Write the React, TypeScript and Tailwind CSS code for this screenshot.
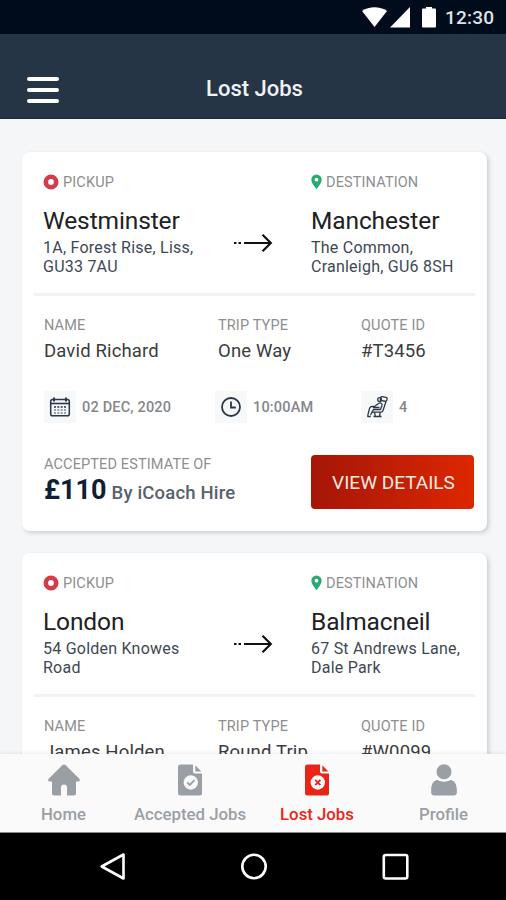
import type { ReactNode } from 'react';

type Job = {
  from: string;
  fromAddress: string[];
  to: string;
  toAddress: string[];
  name: string;
  tripType: string;
  quoteId: string;
  date: string;
  time: string;
  seats: number;
  price: string;
  company: string;
};

const jobs: Job[] = [
  {
    from: 'Westminster',
    fromAddress: ['1A, Forest Rise, Liss,', 'GU33 7AU'],
    to: 'Manchester',
    toAddress: ['The Common,', 'Cranleigh, GU6 8SH'],
    name: 'David Richard',
    tripType: 'One Way',
    quoteId: '#T3456',
    date: '02 DEC, 2020',
    time: '10:00AM',
    seats: 4,
    price: '£110',
    company: 'iCoach Hire',
  },
  {
    from: 'London',
    fromAddress: ['54 Golden Knowes', 'Road'],
    to: 'Balmacneil',
    toAddress: ['67 St Andrews Lane,', 'Dale Park'],
    name: 'James Holden',
    tripType: 'Round Trip',
    quoteId: '#W0099',
    date: '02 DEC, 2020',
    time: '10:00AM',
    seats: 4,
    price: '£110',
    company: 'iCoach Hire',
  },
];

function StatusBar() {
  return (
    <div className="flex h-[34px] shrink-0 items-center bg-[#000c1b] pl-[361px] text-white">
      <svg width="27" height="22" viewBox="0 0 27 22" fill="currentColor">
        <path d="M1 5C8 .1 19 .1 26 5L13.5 21z" />
      </svg>
      <svg className="ml-0.5" width="20" height="22" viewBox="0 0 20 22" fill="currentColor">
        <path d="M20 1v20.500H0z" />
      </svg>
      <svg className="ml-3" width="14" height="22" viewBox="0 0 14 22" fill="currentColor">
        <path d="M4 1h6v1.500h3a1 1 0 0 1 1 1V20.500a1 1 0 0 1-1 1H1a1 1 0 0 1-1-1V3.500a1 1 0 0 1 1-1h3z" />
      </svg>
      <span className="mt-0.5 ml-[9px] text-[19px] font-medium tracking-[0.2px] text-[#dfe2e6]">12:30</span>
    </div>
  );
}

function Header() {
  return (
    <header className="grid h-[85px] shrink-0 grid-cols-[1fr_auto_1fr] items-center border-b border-[#1c2938] bg-[#263545] pr-6 pl-[27px] pt-[25px]">
      <button type="button" aria-label="Menu" className="mt-0.5 flex w-8 flex-col gap-[7px]">
        <span className="h-1 rounded-sm bg-white" />
        <span className="h-1 rounded-sm bg-white" />
        <span className="h-1 rounded-sm bg-white" />
      </button>
      <h1 className="text-[22px] leading-7 font-medium text-[#f0f2f5]">Lost Jobs</h1>
    </header>
  );
}

function PickupIcon() {
  return (
    <svg className="mb-[3px]" width="16" height="16" viewBox="0 0 16 16">
      <circle cx="8" cy="8" r="5.200" fill="none" stroke="#d63b4b" strokeWidth="4.600" />
    </svg>
  );
}

function PinIcon() {
  return (
    <svg className="mb-[3px]" width="11" height="16" viewBox="0 0 11 16">
      <path
        fill="#28ab72"
        fillRule="evenodd"
        d="M5.500 .5A5.200 5.200 0 0 0 .3 5.700C.3 9 5.500 15.200 5.500 15.200S10.700 9 10.700 5.700A5.200 5.200 0 0 0 5.500 .5zm0 3.300a1.900 1.900 0 1 1 0 3.800a1.900 1.900 0 0 1 0-3.800z"
      />
    </svg>
  );
}

function ArrowIcon() {
  return (
    <svg width="40" height="20" viewBox="0 0 40 20" fill="none" stroke="#111" strokeWidth="2.200">
      <path d="M1 10h2.500M5.500 10h2.500M11 10h26" />
      <path d="M29.500 1.800L37.800 10l-8.300 8.200" />
    </svg>
  );
}

function CalendarIcon() {
  return (
    <svg width="22" height="22" viewBox="0 0 22 22" fill="none" stroke="#2b3747">
      <rect x="1.700" y="3.500" width="18.600" height="16.300" rx="1.800" strokeWidth="1.500" />
      <path d="M5 1.500v4M17 1.500v4" strokeWidth="2" />
      <path d="M2 7.500h18" strokeWidth="1.600" />
      <path d="M5 11h12" strokeWidth="1.700" strokeDasharray="2 1.330" />
      <path d="M5 14h12M5 17h12" strokeWidth="1.500" strokeDasharray="2 1.330" opacity=".6" />
    </svg>
  );
}

function ClockIcon() {
  return (
    <svg width="22" height="22" viewBox="0 0 22 22" fill="none" stroke="#2b3747" strokeWidth="1.800">
      <circle cx="11" cy="11" r="9" />
      <path d="M11 5.500V11.500h4.800" />
    </svg>
  );
}

function SeatIcon() {
  return (
    <svg width="21" height="22" viewBox="0 0 21 22" fill="none" stroke="#2b3747" strokeWidth="1.300" strokeLinejoin="round">
      <rect x="13.500" y="1" width="6.500" height="4" rx="1.300" transform="rotate(9 17 3)" />
      <path d="M19 5.500l-3 9c-.4 1.200-1 1.700-2.200 1.700H4.500" />
      <circle cx="12.600" cy="3.500" r="1.900" />
      <path d="M7.500 10.500l4-3c2-1.400 4 .2 3.500 1.800l-1.500 4.200H6.500L3.500 19M7.500 10.500H5c-1.400 0-1.900.6-2.400 1.700L1 18.500" />
      <path d="M6 11.500h6.500M7.500 16.200l.8 4M13.300 16.200l-.8 4M6.500 20.500h8M.8 18.500v2H3.800" />
    </svg>
  );
}

function Label({ children }: { children: ReactNode }) {
  return <div className="text-[14.500px] leading-5 tracking-[0.130px] text-[#8e8e90]">{children}</div>;
}

function Place({ icon, label, title, address }: { icon: ReactNode; label: string; title: string; address: string[] }) {
  return (
    <div>
      <div className="flex items-center gap-1">
        {icon}
        <Label>{label}</Label>
      </div>
      <div className="mt-[13px] text-[24.500px] leading-[30px] tracking-[-0.120px] text-[#202124]">{title}</div>
      <div className="mt-0.5 text-[16px] leading-[19px] tracking-[0.230px] text-[#3e4855]">
        {address.map((line) => (
          <div key={line}>{line}</div>
        ))}
      </div>
    </div>
  );
}

function Field({ label, value }: { label: string; value: string }) {
  return (
    <div>
      <Label>{label}</Label>
      <div className="mt-[3px] text-[18.500px] leading-6 tracking-[0.150px] text-[#3b3c40]">{value}</div>
    </div>
  );
}

function Meta({ icon, children }: { icon: ReactNode; children: ReactNode }) {
  return (
    <div className="flex items-center gap-1.5">
      <span className="flex size-8 items-center justify-center bg-[#f6f8fa]">{icon}</span>
      <span className="mt-0.5 text-[14.500px] font-medium tracking-[0.180px] text-[#85878a]">{children}</span>
    </div>
  );
}

function JobCard({ job }: { job: Job }) {
  return (
    <article className="h-[379px] shrink-0 rounded-lg bg-white px-3 pt-[21px] shadow-[2px_2px_4px_rgba(40,55,75,0.2)]">
      <div className="grid h-[120px] grid-cols-[190px_78px_1fr] pl-[9px]">
        <Place icon={<PickupIcon />} label="PICKUP" title={job.from} address={job.fromAddress} />
        <div className="pt-[60px]">
          <ArrowIcon />
        </div>
        <Place icon={<PinIcon />} label="DESTINATION" title={job.to} address={job.toAddress} />
      </div>
      <div className="h-[3px] bg-[#f1f2f4]" />
      <div className="mt-5 grid grid-cols-[174px_143px_1fr] pl-[10px]">
        <Field label="NAME" value={job.name} />
        <Field label="TRIP TYPE" value={job.tripType} />
        <Field label="QUOTE ID" value={job.quoteId} />
      </div>
      <div className="mt-7 grid grid-cols-[171px_146px_1fr] pl-[10px]">
        <Meta icon={<CalendarIcon />}>{job.date}</Meta>
        <Meta icon={<ClockIcon />}>{job.time}</Meta>
        <Meta icon={<SeatIcon />}>{job.seats}</Meta>
      </div>
      <div className="mt-8 flex justify-between pr-px pl-[10px]">
        <div>
          <Label>ACCEPTED ESTIMATE OF</Label>
          <div className="-mt-px flex items-baseline gap-[5px] leading-8">
            <span className="text-[27px] font-bold text-[#101f36]">{job.price}</span>
            <span className="text-[18.500px] font-medium tracking-[0.180px] text-[#59616d]">By {job.company}</span>
          </div>
        </div>
        <button
          type="button"
          className="h-[54px] w-[163px] rounded bg-linear-to-r from-[#a51607] to-[#dd2700] pt-0.5 pl-0.5 text-[19px] text-[#fbe9e5]"
        >
          VIEW DETAILS
        </button>
      </div>
    </article>
  );
}

function HomeIcon() {
  return (
    <svg width="32" height="32" viewBox="0 0 32 32" fill="currentColor">
      <path d="M14.500 1c.9-.8 2.100-.8 3 0L31.300 14.800c1.100 1.200.5 2.700-1 2.700H28V29a2.500 2.500 0 0 1-2.500 2.500H19V23.500a3 3 0 0 0-6 0v8H6.500A2.500 2.500 0 0 1 4 29V17.500H1.700c-1.500 0-2.100-1.500-1-2.700z" />
    </svg>
  );
}

function FileIcon({ mark }: { mark: 'check' | 'cross' }) {
  return (
    <svg width="24" height="32" viewBox="0 0 24 32">
      <path fill="currentColor" d="M2.500 .5H15V7.500a2 2 0 0 0 2 2h7V29.500a2 2 0 0 1-2 2H2.500a2.500 2.500 0 0 1-2.500-2.500V3A2.500 2.500 0 0 1 2.500 .5z" />
      <path fill="currentColor" d="M17.300 1.200L23.300 7.500H17.300z" />
      <circle cx="12.800" cy="18.500" r="7.200" fill="#fafafa" />
      <path
        d={mark === 'check' ? 'M9.300 18.500l2.500 2.500 4.700-4.800' : 'M10.200 15.900l5.200 5.200M15.400 15.900L10.200 21.100'}
        fill="none"
        stroke="currentColor"
        strokeWidth="1.800"
      />
    </svg>
  );
}

function ProfileIcon() {
  return (
    <svg width="26" height="32" viewBox="0 0 26 32" fill="currentColor">
      <circle cx="13" cy="7.800" r="7.500" />
      <path d="M6.500 16c3.800 2.300 9.200 2.300 13 0 4 .5 6.300 4 6.300 10v2.200a3.300 3.300 0 0 1-3.300 3.300h-19A3.300 3.300 0 0 1 .2 28.200V26c0-6 2.300-9.500 6.300-10z" />
    </svg>
  );
}

const tabs = [
  { label: 'Home', icon: <HomeIcon />, active: false },
  { label: 'Accepted Jobs', icon: <FileIcon mark="check" />, active: false },
  { label: 'Lost Jobs', icon: <FileIcon mark="cross" />, active: true },
  { label: 'Profile', icon: <ProfileIcon />, active: false },
];

function TabBar() {
  return (
    <nav className="z-10 grid h-[79px] shrink-0 grid-cols-[126px_127px_127px_126px] border-b border-[#8c8c8c] bg-[#fafafa] shadow-[0_-1px_4px_rgba(0,0,0,0.08)]">
      {tabs.map((tab) => (
        <button
          key={tab.label}
          type="button"
          className={`flex flex-col items-center pt-[10px] pl-px whitespace-nowrap ${tab.active ? 'text-[#ec2418]' : 'text-[#999fa5]'}`}
        >
          {tab.icon}
          <span className="mt-1.5 text-[16.800px] leading-6 font-medium">{tab.label}</span>
        </button>
      ))}
    </nav>
  );
}

function SystemNav() {
  return (
    <div className="flex h-[67px] shrink-0 items-center justify-between bg-black pr-[97px] pl-[98px]">
      <svg width="28" height="28" viewBox="0 0 28 28" fill="none" stroke="#fff" strokeWidth="2.600" strokeLinejoin="round">
        <path d="M3.700 13.500L25.500 1.500v24z" />
      </svg>
      <svg width="28" height="28" viewBox="0 0 28 28" fill="none" stroke="#fff" strokeWidth="2.600">
        <circle cx="14" cy="13.500" r="11.700" />
      </svg>
      <svg width="28" height="28" viewBox="0 0 28 28" fill="none" stroke="#fff" strokeWidth="2.600">
        <rect x="2.800" y="2" width="23.500" height="23.500" rx="2" />
      </svg>
    </div>
  );
}

export default function App() {
  return (
    <div className="flex h-[900px] w-[506px] flex-col overflow-hidden bg-[#f4f6f8] font-['Roboto',sans-serif]">
      <StatusBar />
      <Header />
      <main className="flex min-h-0 flex-1 flex-col gap-[22px] overflow-hidden pt-[33px] pr-[19px] pl-[22px]">
        {jobs.map((job) => (
          <JobCard key={job.from} job={job} />
        ))}
      </main>
      <TabBar />
      <SystemNav />
    </div>
  );
}
